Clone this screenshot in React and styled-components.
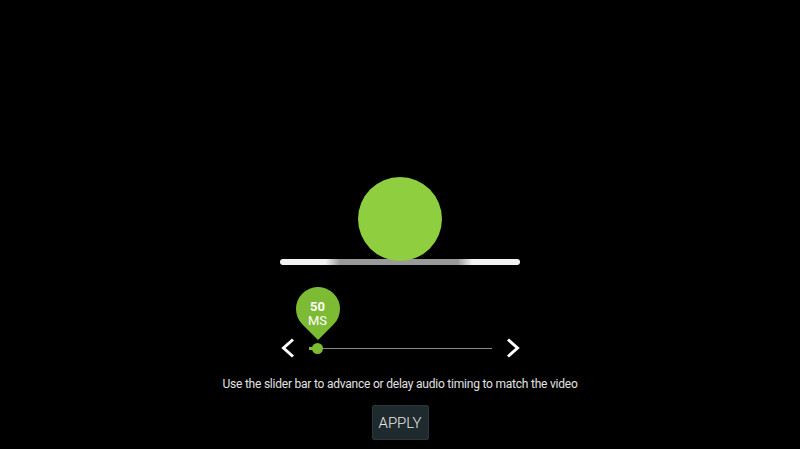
import React from 'react';
import styled, { createGlobalStyle } from 'styled-components';

const GlobalStyle = createGlobalStyle`
    html, body {
        margin: 0;
        padding: 0;
        background: #000;
    }
    body {
        font-family: Roboto, "Liberation Sans", sans-serif;
    }
`;

const Page = styled.div`
    width: 800px;
    height: 449px;
    background: #000;
    display: flex;
    flex-direction: column;
    align-items: center;
    overflow: hidden;
`;

const Stage = styled.div`
    padding-top: 177px;
    width: 240px;
    display: flex;
    flex-direction: column;
    align-items: center;
`;

const Ball = styled.div`
    width: 84px;
    height: 84px;
    border-radius: 50%;
    background: #8fce3e;
    filter: blur(0.6px);
`;

const SyncBar = styled.div`
    width: 240px;
    height: 6px;
    margin-top: -2px;
    border-radius: 3px;
    background: linear-gradient(
        to right,
        #f2f2f2 0%,
        #f2f2f2 19%,
        #9a9a9a 25%,
        #9a9a9a 74%,
        #f2f2f2 80%,
        #f2f2f2 100%
    );
`;

const SliderRow = styled.div`
    margin-top: 73px;
    height: 20px;
    display: flex;
    align-items: center;
    gap: 14px;
`;

const ArrowButton = styled.button`
    background: none;
    border: none;
    padding: 0;
    width: 14px;
    height: 20px;
    display: flex;
    align-items: center;
    justify-content: center;
    cursor: pointer;
`;

const Track = styled.div`
    position: relative;
    width: 183px;
    height: 1px;
    background: #8a8a8a;
`;

const Fill = styled.div`
    position: absolute;
    left: 0;
    top: -1px;
    height: 3px;
    background: #7dbb35;
`;

const Thumb = styled.div`
    position: absolute;
    top: -5px;
    width: 11px;
    height: 11px;
    margin-left: -5.5px;
    border-radius: 50%;
    background: #7dbb35;
`;

const Pin = styled.div`
    position: absolute;
    bottom: 9px;
    width: 44px;
    height: 53px;
    margin-left: -22px;
`;

const PinLabel = styled.div`
    position: absolute;
    top: 13px;
    left: 0;
    width: 44px;
    display: flex;
    flex-direction: column;
    align-items: center;
    color: #fff;
    font-size: 13px;
    line-height: 14px;
`;

const PinValue = styled.span`
    font-weight: 700;
`;

const Caption = styled.p`
    margin: 18px 0 0;
    color: #e2e2e2;
    font-size: 12px;
    letter-spacing: -0.22px;
    line-height: 16px;
`;

const ApplyButton = styled.button`
    margin-top: 13px;
    width: 57px;
    height: 35px;
    background: #1e2a2e;
    border: 1px solid #2b383c;
    border-radius: 2px;
    color: #e6e6e6;
    font-family: Roboto, "Liberation Sans", sans-serif;
    font-size: 15px;
    font-weight: 300;
    padding: 0;
    cursor: pointer;
`;

const Chevron = ({ dir }) => (
    <svg width="14" height="20" viewBox="0 0 14 20">
        <polyline
            points={dir === 'left' ? '12,1.5 2.5,10 12,18.5' : '2,1.5 11.5,10 2,18.5'}
            fill="none"
            stroke="#fff"
            strokeWidth="3"
        />
    </svg>
);

const PinShape = () => (
    <svg width="44" height="53" viewBox="0 0 44 53">
        <path d="M22 53 L6.5 37.6 A22 22 0 1 1 37.5 37.6 Z" fill="#7dbb35" />
    </svg>
);

const App = () => {
    const value = 50;
    const pos = 9; // px from track start

    return (
        <>
            <GlobalStyle />
            <Page>
                <Stage>
                    <Ball />
                    <SyncBar />
                </Stage>
                <SliderRow>
                    <ArrowButton aria-label="decrease">
                        <Chevron dir="left" />
                    </ArrowButton>
                    <Track>
                        <Fill style={{ width: pos }} />
                        <Thumb style={{ left: pos }} />
                        <Pin style={{ left: pos }}>
                            <PinShape />
                            <PinLabel>
                                <PinValue>{value}</PinValue>
                                <span>MS</span>
                            </PinLabel>
                        </Pin>
                    </Track>
                    <ArrowButton aria-label="increase">
                        <Chevron dir="right" />
                    </ArrowButton>
                </SliderRow>
                <Caption>Use the slider bar to advance or delay audio timing to match the video</Caption>
                <ApplyButton>APPLY</ApplyButton>
            </Page>
        </>
    );
};

export default App;
